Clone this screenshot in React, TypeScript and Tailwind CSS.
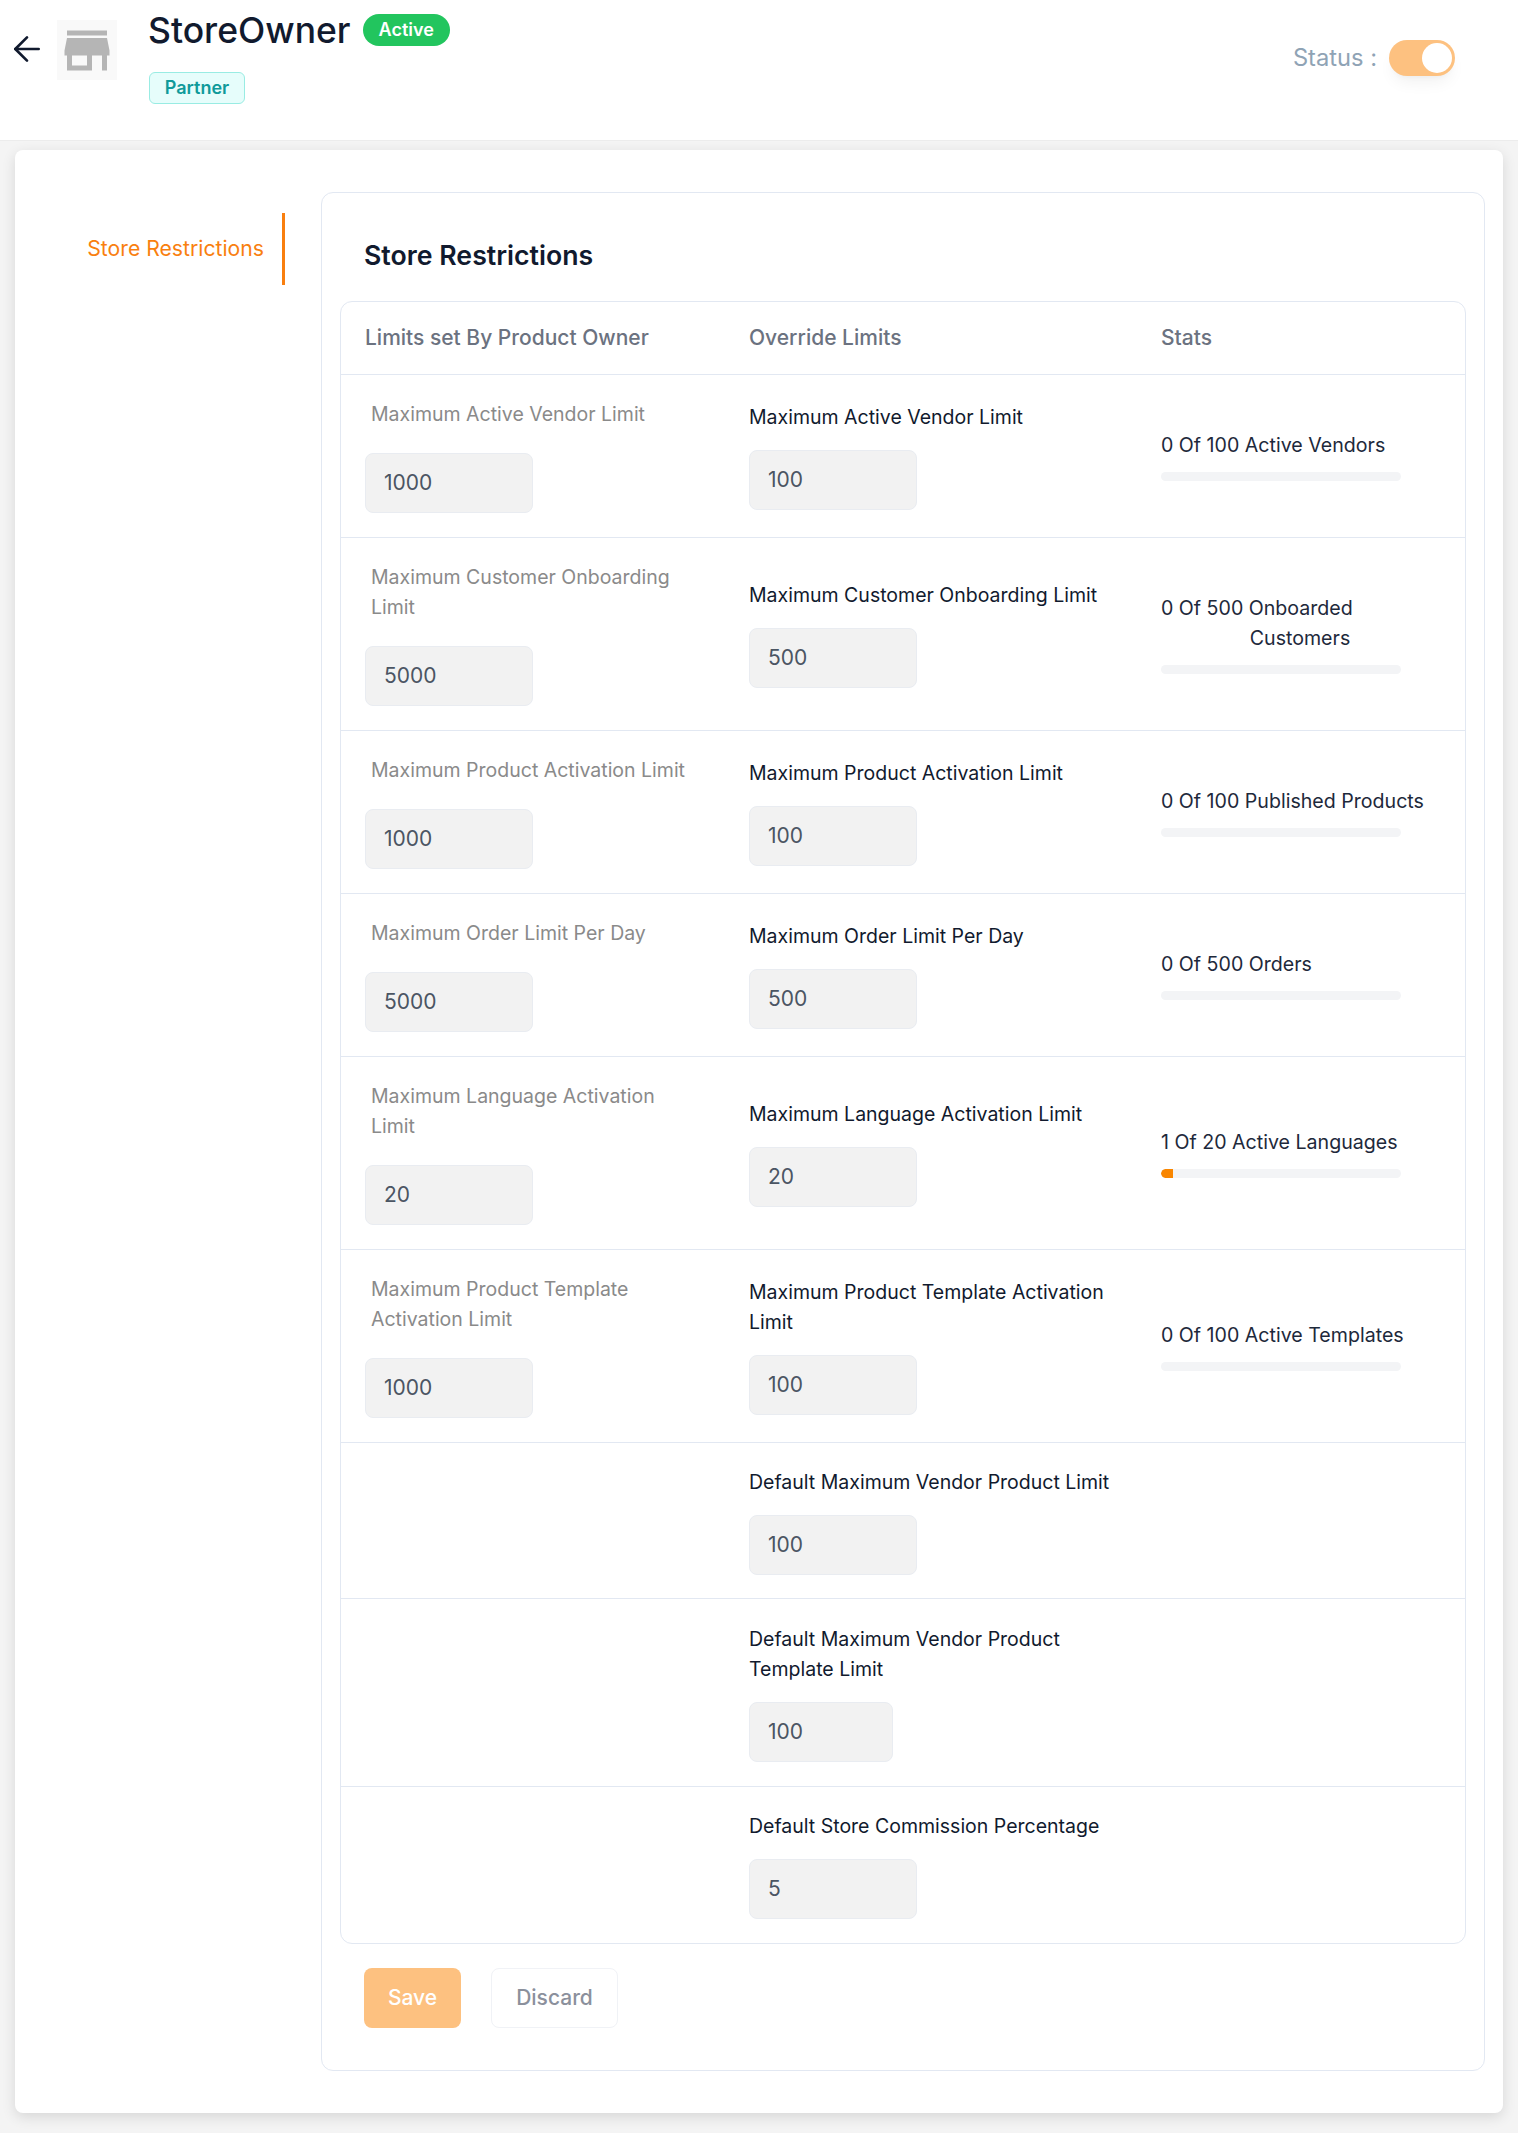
import React from 'react';
import { ArrowLeft } from 'lucide-react';
import { MdStore } from 'react-icons/md';

type Row = {
  ownerLabel?: string[];
  ownerValue?: string;
  label: string[];
  value: string;
  inputWidth?: string;
  stat?: string[];
  progress?: boolean;
  height: string;
};

const rows: Row[] = [
  { ownerLabel: ['Maximum Active Vendor Limit'], ownerValue: '1000', label: ['Maximum Active Vendor Limit'], value: '100', stat: ['0 Of 100 Active Vendors'], height: 'h-[163px]' },
  { ownerLabel: ['Maximum Customer Onboarding', 'Limit'], ownerValue: '5000', label: ['Maximum Customer Onboarding Limit'], value: '500', stat: ['0 Of 500 Onboarded', 'Customers'], height: 'h-[193px]' },
  { ownerLabel: ['Maximum Product Activation Limit'], ownerValue: '1000', label: ['Maximum Product Activation Limit'], value: '100', stat: ['0 Of 100 Published Products'], height: 'h-[163px]' },
  { ownerLabel: ['Maximum Order Limit Per Day'], ownerValue: '5000', label: ['Maximum Order Limit Per Day'], value: '500', stat: ['0 Of 500 Orders'], height: 'h-[163px]' },
  { ownerLabel: ['Maximum Language Activation', 'Limit'], ownerValue: '20', label: ['Maximum Language Activation Limit'], value: '20', stat: ['1 Of 20 Active Languages'], progress: true, height: 'h-[193px]' },
  { ownerLabel: ['Maximum Product Template', 'Activation Limit'], ownerValue: '1000', label: ['Maximum Product Template Activation', 'Limit'], value: '100', stat: ['0 Of 100 Active Templates'], height: 'h-[193px]' },
  { label: ['Default Maximum Vendor Product Limit'], value: '100', height: 'h-[156px]' },
  { label: ['Default Maximum Vendor Product', 'Template Limit'], value: '100', inputWidth: 'w-[144px]', height: 'h-[188px]' },
  { label: ['Default Store Commission Percentage'], value: '5', height: 'h-[156px]' },
];

const LimitInput = ({ value, className = 'w-[168px]' }: { value: string; className?: string }) => (
  <input
    readOnly
    value={value}
    className={`${className} block h-[60px] rounded-lg border border-[#e9ecf1] bg-[#f2f2f2] px-[18px] pb-px text-[21px] text-[#4b5563] outline-none`}
  />
);

const App: React.FC = () => {
  return (
    <div className="min-h-[2133px] bg-[#f4f4f4] font-['Inter',sans-serif]">
      {/* Header */}
      <header className="flex h-[141px] justify-between border-b border-[#ececec] bg-white pl-[7px] pr-[63px]">
        <div className="flex items-start">
          <button className="mt-[29px] flex h-10 w-10 items-center justify-center text-[#111a2e]">
            <ArrowLeft size={40} strokeWidth={1.6} />
          </button>
          <div className="ml-[10px] mt-5 flex h-[60px] w-[60px] items-center justify-center bg-[#f9f9f9] text-[#b5b5b5]">
            <MdStore size={61} />
          </div>
          <div className="ml-8 mt-[9px]">
            <div className="flex items-center gap-3">
              <h1 className="-ml-px text-[35.5px] font-medium leading-[44px] text-[#111a2e]">StoreOwner</h1>
              <span className="-mt-[2px] flex h-8 items-center rounded-full bg-[#22c55e] px-4 pb-px text-[18px] font-semibold text-white">
                Active
              </span>
            </div>
            <span className="mt-[19px] flex h-8 w-[96px] items-center justify-center rounded-md border border-[#99ece3] bg-[#e6fdfb] pb-px text-[18px] font-semibold text-[#0f9a9a]">
              Partner
            </span>
          </div>
        </div>
        <div className="mt-10 flex h-9 items-center gap-3">
          <span className="text-[23.7px] text-[#8fa3b5]">Status :</span>
          <div className="flex h-9 w-[66px] items-center justify-end rounded-full bg-[#fdc180] pr-[3px] shadow-lg shadow-black/5">
            <div className="h-[30px] w-[30px] rounded-full bg-white" />
          </div>
        </div>
      </header>

      {/* Card */}
      <div className="mx-[15px] mt-[9px] flex h-[1963px] rounded-lg bg-white pr-[18px] pt-[42px] shadow-[0_4px_14px_rgba(0,0,0,0.12)]">
        <aside className="w-[270px] shrink-0 pt-[21px]">
          <div className="flex h-[72px] items-center justify-end border-r-[3px] border-[#f97f0f] pr-[18px] text-[21.2px] text-[#f97f0f]">
            Store Restrictions
          </div>
        </aside>
        <main className="ml-9 h-[1879px] flex-1 rounded-xl border border-[#e2e8f2] px-[18px]">
          <h2 className="flex h-[108px] items-center pl-6 pt-[17px] text-[26.7px] font-semibold text-[#111a2e]">
            Store Restrictions
          </h2>

          <div className="rounded-xl border border-[#e2e8f2]">
            <div className="grid h-[73px] grid-cols-[384px_412px_1fr] items-center border-b border-[#e2e8f2] text-[21px] font-medium text-[#6b7280]">
              <div className="pl-6">Limits set By Product Owner</div>
              <div className="pl-6">Override Limits</div>
              <div className="pl-6">Stats</div>
            </div>

            {rows.map((row, index) => (
              <div
                key={index}
                className={`grid grid-cols-[384px_412px_1fr] ${row.height} ${index < rows.length - 1 ? 'border-b border-[#e2e8f2]' : ''}`}
              >
                <div className="pl-6 pt-6">
                  {row.ownerLabel && (
                    <>
                      <div className="mb-6 pl-[6px] text-[19.5px] leading-[30px] text-[#8a8a8a]">
                        {row.ownerLabel.map((line) => (
                          <div key={line}>{line}</div>
                        ))}
                      </div>
                      <LimitInput value={row.ownerValue ?? ''} />
                    </>
                  )}
                </div>
                <div className="flex flex-col justify-center pl-6">
                  <div className="mb-[18px] text-[19.5px] leading-[30px] text-[#111a2e]">
                    {row.label.map((line) => (
                      <div key={line}>{line}</div>
                    ))}
                  </div>
                  <LimitInput value={row.value} className={row.inputWidth ?? 'w-[168px]'} />
                </div>
                <div className="flex flex-col justify-center pb-[2px] pl-6">
                  {row.stat && (
                    <>
                      <div className="text-[19.6px] leading-[30px] text-[#1e293b]">
                        <div>{row.stat[0]}</div>
                        {row.stat[1] && <div className="w-[278px] text-center">{row.stat[1]}</div>}
                      </div>
                      <div className="mt-3 h-[9px] w-[240px] overflow-hidden rounded-full bg-[#f3f4f6]">
                        {row.progress && <div className="h-full w-[12px] rounded-l-full bg-[#f98600]" />}
                      </div>
                    </>
                  )}
                </div>
              </div>
            ))}
          </div>

          <div className="ml-6 mt-6 flex gap-[30px]">
            <button className="h-[60px] w-[97px] rounded-lg bg-[#fdc180] text-[21px] font-medium text-white">Save</button>
            <button className="h-[60px] w-[127px] rounded-lg border border-[#f0f2f6] bg-white text-[21px] font-medium text-[#8b909c]">
              Discard
            </button>
          </div>
        </main>
      </div>
    </div>
  );
};

export default App;
